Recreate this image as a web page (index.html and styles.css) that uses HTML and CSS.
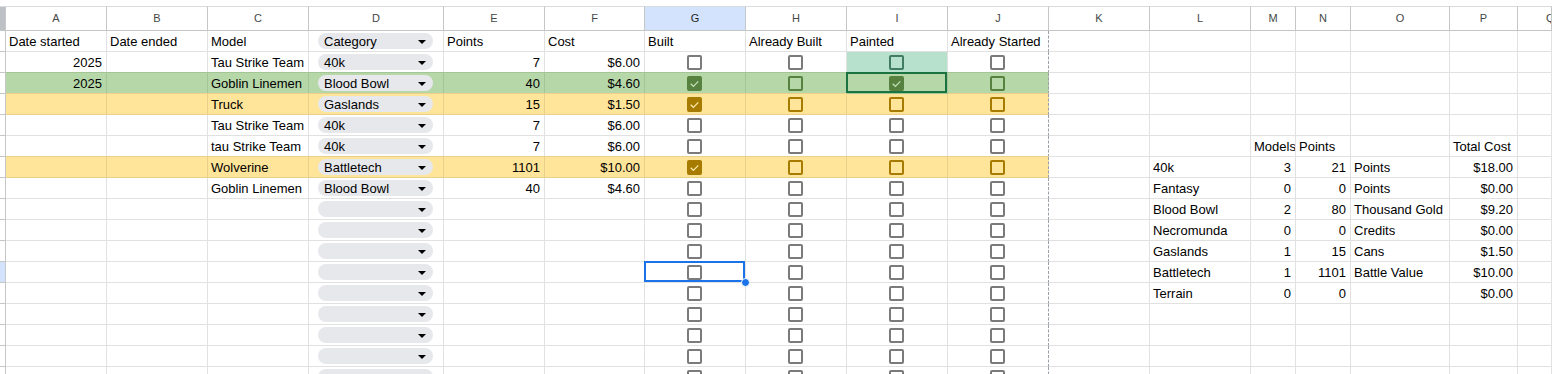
FILE: index.html
```html
<!DOCTYPE html>
<html lang="en">
<head>
    <meta charset="UTF-8">
    <title>Model Tracker</title>
    <link rel="stylesheet" href="styles.css">
</head>
<body>

<div class="sheet">
    <!-- column letters -->
    <div class="row heads">
        <div class="c g corner"></div>
        <div class="c">A</div><div class="c">B</div><div class="c">C</div><div class="c">D</div>
        <div class="c">E</div><div class="c">F</div><div class="c sel">G</div><div class="c">H</div>
        <div class="c">I</div><div class="c">J</div><div class="c">K</div><div class="c">L</div>
        <div class="c">M</div><div class="c">N</div><div class="c">O</div><div class="c">P</div>
        <div class="c q">Q</div>
    </div>

    <!-- 1 -->
    <div class="row">
        <div class="c g"></div>
        <div class="c">Date started</div><div class="c">Date ended</div><div class="c">Model</div>
        <div class="c d"><span class="chip">Category<b></b></span></div>
        <div class="c">Points</div><div class="c">Cost</div><div class="c">Built</div>
        <div class="c">Already Built</div><div class="c">Painted</div><div class="c j">Already Started</div>
        <div class="c"></div><div class="c"></div><div class="c"></div><div class="c"></div><div class="c"></div><div class="c"></div><div class="c"></div>
    </div>

    <!-- 2 -->
    <div class="row">
        <div class="c g"></div>
        <div class="c r">2025</div><div class="c"></div><div class="c">Tau Strike Team</div>
        <div class="c d"><span class="chip">40k<b></b></span></div>
        <div class="c r">7</div><div class="c r">$6.00</div>
        <div class="c cb"><i class="box"></i></div>
        <div class="c cb"><i class="box"></i></div>
        <div class="c cb teal"><i class="box"></i></div>
        <div class="c cb j"><i class="box"></i></div>
        <div class="c"></div><div class="c"></div><div class="c"></div><div class="c"></div><div class="c"></div><div class="c"></div><div class="c"></div>
    </div>

    <!-- 3 -->
    <div class="row green">
        <div class="c g"></div>
        <div class="c f r">2025</div><div class="c f"></div><div class="c f">Goblin Linemen</div>
        <div class="c f d"><span class="chip">Blood Bowl<b></b></span></div>
        <div class="c f r">40</div><div class="c f r">$4.60</div>
        <div class="c f cb"><i class="box on"><svg viewBox="0 0 11 11"><path d="M1.7 5.8l2.7 2.5 4.9-5"/></svg></i></div>
        <div class="c f cb"><i class="box"></i></div>
        <div class="c f cb mark"><i class="box on"><svg viewBox="0 0 11 11"><path d="M1.7 5.8l2.7 2.5 4.9-5"/></svg></i></div>
        <div class="c f cb j"><i class="box"></i></div>
        <div class="c"></div><div class="c"></div><div class="c"></div><div class="c"></div><div class="c"></div><div class="c"></div><div class="c"></div>
    </div>

    <!-- 4 -->
    <div class="row yellow">
        <div class="c g"></div>
        <div class="c f"></div><div class="c f"></div><div class="c f">Truck</div>
        <div class="c f d"><span class="chip">Gaslands<b></b></span></div>
        <div class="c f r">15</div><div class="c f r">$1.50</div>
        <div class="c f cb"><i class="box on"><svg viewBox="0 0 11 11"><path d="M1.7 5.8l2.7 2.5 4.9-5"/></svg></i></div>
        <div class="c f cb"><i class="box"></i></div>
        <div class="c f cb"><i class="box"></i></div>
        <div class="c f cb j"><i class="box"></i></div>
        <div class="c"></div><div class="c"></div><div class="c"></div><div class="c"></div><div class="c"></div><div class="c"></div><div class="c"></div>
    </div>

    <!-- 5 -->
    <div class="row">
        <div class="c g"></div>
        <div class="c"></div><div class="c"></div><div class="c">Tau Strike Team</div>
        <div class="c d"><span class="chip">40k<b></b></span></div>
        <div class="c r">7</div><div class="c r">$6.00</div>
        <div class="c cb"><i class="box"></i></div><div class="c cb"><i class="box"></i></div>
        <div class="c cb"><i class="box"></i></div><div class="c cb j"><i class="box"></i></div>
        <div class="c"></div><div class="c"></div><div class="c"></div><div class="c"></div><div class="c"></div><div class="c"></div><div class="c"></div>
    </div>

    <!-- 6 -->
    <div class="row">
        <div class="c g"></div>
        <div class="c"></div><div class="c"></div><div class="c">tau Strike Team</div>
        <div class="c d"><span class="chip">40k<b></b></span></div>
        <div class="c r">7</div><div class="c r">$6.00</div>
        <div class="c cb"><i class="box"></i></div><div class="c cb"><i class="box"></i></div>
        <div class="c cb"><i class="box"></i></div><div class="c cb j"><i class="box"></i></div>
        <div class="c"></div><div class="c"></div>
        <div class="c">Models</div><div class="c">Points</div><div class="c"></div><div class="c">Total Cost</div><div class="c"></div>
    </div>

    <!-- 7 -->
    <div class="row yellow">
        <div class="c g"></div>
        <div class="c f"></div><div class="c f"></div><div class="c f">Wolverine</div>
        <div class="c f d"><span class="chip">Battletech<b></b></span></div>
        <div class="c f r">1101</div><div class="c f r">$10.00</div>
        <div class="c f cb"><i class="box on"><svg viewBox="0 0 11 11"><path d="M1.7 5.8l2.7 2.5 4.9-5"/></svg></i></div>
        <div class="c f cb"><i class="box"></i></div>
        <div class="c f cb"><i class="box"></i></div>
        <div class="c f cb j"><i class="box"></i></div>
        <div class="c"></div>
        <div class="c">40k</div><div class="c r">3</div><div class="c r">21</div><div class="c">Points</div><div class="c r">$18.00</div><div class="c"></div>
    </div>

    <!-- 8 -->
    <div class="row">
        <div class="c g"></div>
        <div class="c"></div><div class="c"></div><div class="c">Goblin Linemen</div>
        <div class="c d"><span class="chip">Blood Bowl<b></b></span></div>
        <div class="c r">40</div><div class="c r">$4.60</div>
        <div class="c cb"><i class="box"></i></div><div class="c cb"><i class="box"></i></div>
        <div class="c cb"><i class="box"></i></div><div class="c cb j"><i class="box"></i></div>
        <div class="c"></div>
        <div class="c">Fantasy</div><div class="c r">0</div><div class="c r">0</div><div class="c">Points</div><div class="c r">$0.00</div><div class="c"></div>
    </div>

    <!-- 9 -->
    <div class="row">
        <div class="c g"></div>
        <div class="c"></div><div class="c"></div><div class="c"></div>
        <div class="c d"><span class="chip"><b></b></span></div>
        <div class="c"></div><div class="c"></div>
        <div class="c cb"><i class="box"></i></div><div class="c cb"><i class="box"></i></div>
        <div class="c cb"><i class="box"></i></div><div class="c cb j"><i class="box"></i></div>
        <div class="c"></div>
        <div class="c">Blood Bowl</div><div class="c r">2</div><div class="c r">80</div><div class="c">Thousand Gold</div><div class="c r">$9.20</div><div class="c"></div>
    </div>

    <!-- 10 -->
    <div class="row">
        <div class="c g"></div>
        <div class="c"></div><div class="c"></div><div class="c"></div>
        <div class="c d"><span class="chip"><b></b></span></div>
        <div class="c"></div><div class="c"></div>
        <div class="c cb"><i class="box"></i></div><div class="c cb"><i class="box"></i></div>
        <div class="c cb"><i class="box"></i></div><div class="c cb j"><i class="box"></i></div>
        <div class="c"></div>
        <div class="c">Necromunda</div><div class="c r">0</div><div class="c r">0</div><div class="c">Credits</div><div class="c r">$0.00</div><div class="c"></div>
    </div>

    <!-- 11 -->
    <div class="row">
        <div class="c g"></div>
        <div class="c"></div><div class="c"></div><div class="c"></div>
        <div class="c d"><span class="chip"><b></b></span></div>
        <div class="c"></div><div class="c"></div>
        <div class="c cb"><i class="box"></i></div><div class="c cb"><i class="box"></i></div>
        <div class="c cb"><i class="box"></i></div><div class="c cb j"><i class="box"></i></div>
        <div class="c"></div>
        <div class="c">Gaslands</div><div class="c r">1</div><div class="c r">15</div><div class="c">Cans</div><div class="c r">$1.50</div><div class="c"></div>
    </div>

    <!-- 12 (active cell G12) -->
    <div class="row">
        <div class="c g on"></div>
        <div class="c"></div><div class="c"></div><div class="c"></div>
        <div class="c d"><span class="chip"><b></b></span></div>
        <div class="c"></div><div class="c"></div>
        <div class="c cb active"><i class="box"></i></div><div class="c cb"><i class="box"></i></div>
        <div class="c cb"><i class="box"></i></div><div class="c cb j"><i class="box"></i></div>
        <div class="c"></div>
        <div class="c">Battletech</div><div class="c r">1</div><div class="c r">1101</div><div class="c">Battle Value</div><div class="c r">$10.00</div><div class="c"></div>
    </div>

    <!-- 13 -->
    <div class="row">
        <div class="c g"></div>
        <div class="c"></div><div class="c"></div><div class="c"></div>
        <div class="c d"><span class="chip"><b></b></span></div>
        <div class="c"></div><div class="c"></div>
        <div class="c cb"><i class="box"></i></div><div class="c cb"><i class="box"></i></div>
        <div class="c cb"><i class="box"></i></div><div class="c cb j"><i class="box"></i></div>
        <div class="c"></div>
        <div class="c">Terrain</div><div class="c r">0</div><div class="c r">0</div><div class="c"></div><div class="c r">$0.00</div><div class="c"></div>
    </div>

    <!-- 14 -->
    <div class="row">
        <div class="c g"></div>
        <div class="c"></div><div class="c"></div><div class="c"></div>
        <div class="c d"><span class="chip"><b></b></span></div>
        <div class="c"></div><div class="c"></div>
        <div class="c cb"><i class="box"></i></div><div class="c cb"><i class="box"></i></div>
        <div class="c cb"><i class="box"></i></div><div class="c cb j"><i class="box"></i></div>
        <div class="c"></div><div class="c"></div><div class="c"></div><div class="c"></div><div class="c"></div><div class="c"></div><div class="c"></div>
    </div>

    <!-- 15 -->
    <div class="row">
        <div class="c g"></div>
        <div class="c"></div><div class="c"></div><div class="c"></div>
        <div class="c d"><span class="chip"><b></b></span></div>
        <div class="c"></div><div class="c"></div>
        <div class="c cb"><i class="box"></i></div><div class="c cb"><i class="box"></i></div>
        <div class="c cb"><i class="box"></i></div><div class="c cb j"><i class="box"></i></div>
        <div class="c"></div><div class="c"></div><div class="c"></div><div class="c"></div><div class="c"></div><div class="c"></div><div class="c"></div>
    </div>

    <!-- 16 -->
    <div class="row">
        <div class="c g"></div>
        <div class="c"></div><div class="c"></div><div class="c"></div>
        <div class="c d"><span class="chip"><b></b></span></div>
        <div class="c"></div><div class="c"></div>
        <div class="c cb"><i class="box"></i></div><div class="c cb"><i class="box"></i></div>
        <div class="c cb"><i class="box"></i></div><div class="c cb j"><i class="box"></i></div>
        <div class="c"></div><div class="c"></div><div class="c"></div><div class="c"></div><div class="c"></div><div class="c"></div><div class="c"></div>
    </div>

    <!-- 17 -->
    <div class="row">
        <div class="c g"></div>
        <div class="c"></div><div class="c"></div><div class="c"></div>
        <div class="c d"><span class="chip"><b></b></span></div>
        <div class="c"></div><div class="c"></div>
        <div class="c cb"><i class="box"></i></div><div class="c cb"><i class="box"></i></div>
        <div class="c cb"><i class="box"></i></div><div class="c cb j"><i class="box"></i></div>
        <div class="c"></div><div class="c"></div><div class="c"></div><div class="c"></div><div class="c"></div><div class="c"></div><div class="c"></div>
    </div>
</div>

</body>
</html>
```

FILE: styles.css
```css
body {
    margin: 0;
    background: #fff;
    font-family: "Liberation Sans", Arial, sans-serif;
    font-size: 13px;
    color: #000;
    overflow: hidden;
}
.sheet {
    padding-top: 6px;
}
.row {
    display: grid;
    grid-template-columns: 6px 101px 101px 101px 135px 101px 100px 101px 101px 101px 101px 101px 101px 45px 55px 99px 68px 1fr;
    height: 21px;
}
.c {
    box-sizing: border-box;
    border-right: 1px solid #e1e1e1;
    border-bottom: 1px solid #e1e1e1;
    padding: 1px 3px 0 3px;
    line-height: 19px;
    white-space: nowrap;
    overflow: hidden;
    position: relative;
}
.r {
    text-align: right;
    padding-right: 4px;
}

/* column letters */
.heads {
    height: 25px;
}
.heads .c {
    border-top: 1px solid #dadce0;
    border-right-color: #c4c7c5;
    border-bottom-color: #c4c7c5;
    text-align: center;
    font-size: 11px;
    line-height: 22px;
    padding: 0;
    color: #444746;
}
.heads .sel {
    background: #d3e3fd;
    color: #1f1f1f;
}
.heads .corner {
    background: #bdc1c6;
}
.heads .q {
    text-align: left;
    padding-left: 28px;
}

/* row gutter */
.g {
    padding: 0;
    border-right-color: #c4c7c5;
    border-bottom-color: #c4c7c5;
}
.g.on {
    background: #d3e3fd;
}
.j {
    border-right: 1px dashed #9aa0a6;
}

/* coloured rows */
.green .f {
    background: #b6d7a8;
    border-right-color: #a4c697;
    border-bottom-color: #a4c697;
    box-shadow: 0 -1px 0 #a4c697;
    --cb: #56813f;
    --tick: #c6e2b9;
}
.yellow .f {
    background: #ffe599;
    border-right-color: #ead08a;
    border-bottom-color: #ead08a;
    box-shadow: 0 -1px 0 #ead08a;
    --cb: #a67b00;
    --tick: #ffeab0;
}
.green .f.j,
.yellow .f.j {
    border-right: 1px dashed #9aa0a6;
}
.teal {
    background: #b7e1cd;
    --cb: #3f7c63;
}

/* dropdown chips */
.d {
    padding: 0;
    display: flex;
    align-items: center;
}
.chip {
    display: flex;
    align-items: center;
    box-sizing: border-box;
    margin-left: 9px;
    width: 115px;
    height: 16px;
    padding: 1px 7px 0 6px;
    border-radius: 8px;
    background: #e7e8ec;
    line-height: 16px;
}
.chip b {
    margin-left: auto;
    width: 0;
    height: 0;
    border-left: 4px solid transparent;
    border-right: 4px solid transparent;
    border-top: 4px solid #000;
}

/* checkboxes */
.cb {
    padding: 0;
    display: flex;
    align-items: center;
    justify-content: center;
}
.box {
    display: block;
    box-sizing: border-box;
    width: 15px;
    height: 15px;
    border: 2px solid var(--cb, #7b7b7b);
    border-radius: 2px;
    margin-left: -1px;
}
.box.on {
    background: var(--cb, #7b7b7b);
}
.box svg {
    display: block;
    width: 11px;
    height: 11px;
}
.box path {
    fill: none;
    stroke: var(--tick, #fff);
    stroke-width: 1.2;
}

/* cell highlights */
.c.mark,
.c.active {
    overflow: visible;
    z-index: 2;
}
.mark::after,
.active::after {
    content: "";
    position: absolute;
    top: -1px;
    left: -1px;
    right: 0;
    bottom: 0;
    border: 2px solid #1a7340;
}
.active::after {
    border-color: #1a73e8;
}
.active::before {
    content: "";
    position: absolute;
    right: -5px;
    bottom: -5px;
    width: 7px;
    height: 7px;
    border-radius: 50%;
    background: #1a73e8;
    border: 1px solid #fff;
    z-index: 3;
}
```
